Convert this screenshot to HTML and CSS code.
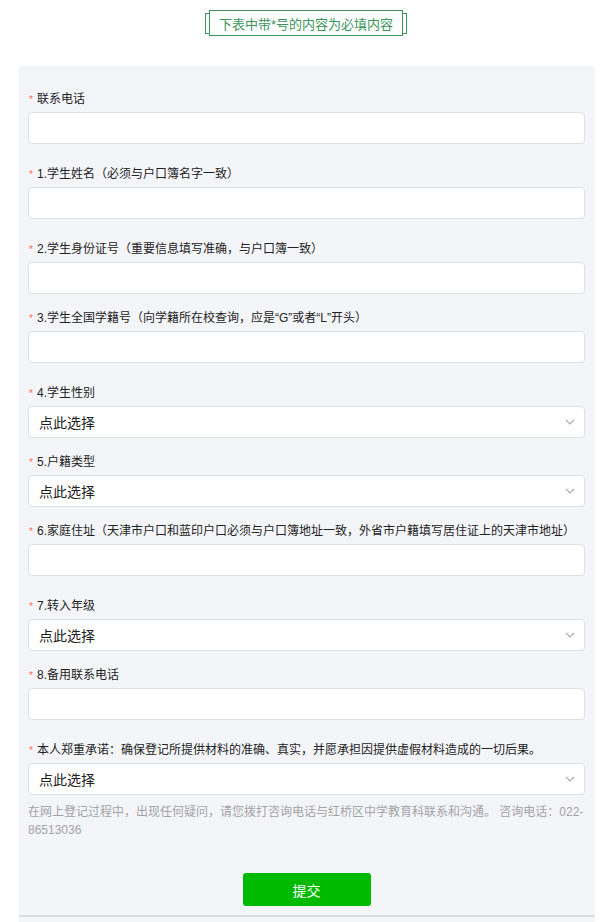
FILE: index.html
```html
<!DOCTYPE html>
<html lang="zh">
<head>
<meta charset="utf-8">
<link rel="stylesheet" href="styles.css">
</head>
<body>
<div class="title-wrap">
  <div class="title">
    <span class="br br-l"></span>
    <span class="title-box">下表中带*号的内容为必填内容</span>
    <span class="br br-r"></span>
  </div>
</div>
<div class="panel">
  <div class="field m-l">
    <div class="label"><span class="req">*</span>联系电话</div>
    <div class="input"></div>
  </div>
  <div class="field m-l">
    <div class="label"><span class="req">*</span>1.学生姓名（必须与户口簿名字一致）</div>
    <div class="input"></div>
  </div>
  <div class="field m-s">
    <div class="label"><span class="req">*</span>2.学生身份证号（重要信息填写准确，与户口簿一致）</div>
    <div class="input"></div>
  </div>
  <div class="field m-l">
    <div class="label"><span class="req">*</span>3.学生全国学籍号（向学籍所在校查询，应是“G”或者“L”开头）</div>
    <div class="input"></div>
  </div>
  <div class="field m-s">
    <div class="label"><span class="req">*</span>4.学生性别</div>
    <div class="input select"><span>点此选择</span><svg class="chev" width="10" height="6" viewBox="0 0 10 6"><polyline points="1,1 5,5 9,1" fill="none" stroke="#aaa" stroke-width="1.1"/></svg></div>
  </div>
  <div class="field m-s">
    <div class="label"><span class="req">*</span>5.户籍类型</div>
    <div class="input select"><span>点此选择</span><svg class="chev" width="10" height="6" viewBox="0 0 10 6"><polyline points="1,1 5,5 9,1" fill="none" stroke="#aaa" stroke-width="1.1"/></svg></div>
  </div>
  <div class="field m-l">
    <div class="label"><span class="req">*</span>6.家庭住址（天津市户口和蓝印户口必须与户口簿地址一致，外省市户籍填写居住证上的天津市地址）</div>
    <div class="input"></div>
  </div>
  <div class="field m-s">
    <div class="label"><span class="req">*</span>7.转入年级</div>
    <div class="input select"><span>点此选择</span><svg class="chev" width="10" height="6" viewBox="0 0 10 6"><polyline points="1,1 5,5 9,1" fill="none" stroke="#aaa" stroke-width="1.1"/></svg></div>
  </div>
  <div class="field m-l">
    <div class="label"><span class="req">*</span>8.备用联系电话</div>
    <div class="input"></div>
  </div>
  <div class="field">
    <div class="label"><span class="req">*</span>本人郑重承诺：确保登记所提供材料的准确、真实，并愿承担因提供虚假材料造成的一切后果。</div>
    <div class="input select"><span>点此选择</span><svg class="chev" width="10" height="6" viewBox="0 0 10 6"><polyline points="1,1 5,5 9,1" fill="none" stroke="#aaa" stroke-width="1.1"/></svg></div>
  </div>
  <p class="notice">在网上登记过程中，出现任何疑问，请您拨打咨询电话与红桥区中学教育科联系和沟通。 咨询电话：022-<wbr>86513036</p>
  <div class="btn-row"><button class="submit">提交</button></div>
  <div class="bottom-line"></div>
</div>
</body>
</html>
```

FILE: styles.css
```css
html, body {
  margin: 0;
  padding: 0;
  background: #ffffff;
}
body {
  font-family: "Liberation Sans", "Noto Sans CJK SC", sans-serif;
  color: #222;
  height: 922px;
  overflow: hidden;
}
.title-wrap {
  display: flex;
  justify-content: center;
  padding-top: 10px;
  height: 66px;
  box-sizing: border-box;
}
.title {
  display: flex;
  align-items: center;
  height: 26px;
}
.br {
  width: 3px;
  height: 19px;
  border: 1px solid #3a955c;
}
.br-l { border-right: none; }
.br-r { border-left: none; }
.title-box {
  display: flex;
  align-items: center;
  justify-content: center;
  height: 24px;
  width: 192px;
  border: 1px solid #3a955c;
  color: #3a955c;
  font-size: 13px;
}
.panel {
  margin-left: 19px;
  width: 576px;
  background: #f4f5f9;
  padding: 25px 10px 0 9px;
  box-sizing: border-box;
  height: 856px;
}
.field {
  display: flex;
  flex-direction: column;
}
.m-l { margin-bottom: 22px; }
.m-s { margin-bottom: 16px; }
.label {
  font-size: 12px;
  line-height: 17px;
  height: 17px;
  margin-bottom: 4px;
  color: #222;
  white-space: nowrap;
  display: flex;
  align-items: center;
}
.req {
  flex: none;
  color: #f26d6d;
  font-size: 10px;
  width: 9px;
  padding-left: 1px;
  box-sizing: border-box;
}
.input {
  height: 32px;
  box-sizing: border-box;
  background: #fff;
  border: 1px solid #dedfe3;
  border-radius: 4px;
}
.select {
  display: flex;
  align-items: center;
  justify-content: space-between;
  padding: 0 9px 0 10px;
  font-size: 14px;
  color: #222;
}
.chev { display: block; }
.notice {
  margin: 8px -6px 0 0;
  font-size: 12px;
  line-height: 18px;
  color: #a2a3a6;
}
.btn-row {
  display: flex;
  justify-content: center;
  margin-top: 34px;
}
.submit {
  width: 128px;
  height: 33px;
  border: none;
  border-radius: 3px;
  background: #00ba00;
  color: #fff;
  font-family: "Liberation Sans", "Noto Sans CJK SC", sans-serif;
  font-size: 14px;
  padding: 0;
}
.bottom-line {
  margin: 9px -10px 0 -9px;
  height: 2px;
  background: #dcdcdc;
}
```
